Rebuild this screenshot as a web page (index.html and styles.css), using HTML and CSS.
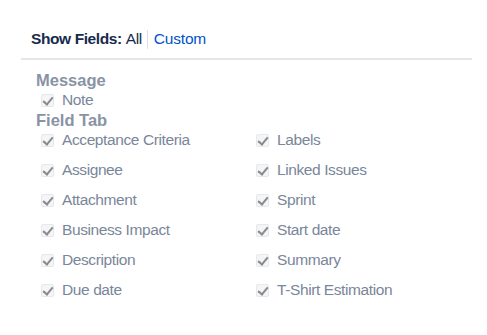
FILE: index.html
```html
<!DOCTYPE html>
<html lang="en">
<head>
    <meta charset="UTF-8">
    <title>Show Fields</title>
    <link rel="stylesheet" href="styles.css">
</head>
<body>
    <div class="toolbar">
        <span class="toolbar-label">Show Fields:</span>
        <span class="toolbar-option">All</span>
        <span class="toolbar-sep"></span>
        <a class="toolbar-option active" href="#">Custom</a>
    </div>
    <hr class="divider">

    <div class="fields">
        <div class="group-title">Message</div>
        <label class="field"><span class="check"></span>Note</label>

        <div class="group-title">Field Tab</div>
        <div class="field-grid">
            <label class="field"><span class="check"></span>Acceptance Criteria</label>
            <label class="field"><span class="check"></span>Labels</label>
            <label class="field"><span class="check"></span>Assignee</label>
            <label class="field"><span class="check"></span>Linked Issues</label>
            <label class="field"><span class="check"></span>Attachment</label>
            <label class="field"><span class="check"></span>Sprint</label>
            <label class="field"><span class="check"></span>Business Impact</label>
            <label class="field"><span class="check"></span>Start date</label>
            <label class="field"><span class="check"></span>Description</label>
            <label class="field"><span class="check"></span>Summary</label>
            <label class="field"><span class="check"></span>Due date</label>
            <label class="field"><span class="check"></span>T-Shirt Estimation</label>
        </div>
    </div>
</body>
</html>
```

FILE: styles.css
```css
body {
    font-family: 'Liberation Sans', Arial, sans-serif;
    margin: 0;
    padding: 29px 0 0 0;
    background-color: #fff;
    color: #7a869a;
}
.toolbar {
    display: flex;
    align-items: center;
    height: 20px;
    padding-left: 31px;
    font-size: 15.5px;
    letter-spacing: -0.4px;
}
.toolbar-label {
    font-weight: bold;
    color: #172b4d;
    margin-right: 4px;
}
.toolbar-option {
    color: #172b4d;
    text-decoration: none;
}
.toolbar-option.active {
    color: #0052cc;
    letter-spacing: -0.2px;
}
.toolbar-sep {
    width: 1px;
    height: 19px;
    background-color: #dfe1e6;
    margin: 0 6px 0 5px;
}
.divider {
    border: none;
    border-top: 2px solid #e4e6ea;
    margin: 9px 15px 0 21px;
}
.fields {
    padding: 10px 0 0 36px;
}
.group-title {
    font-size: 16.5px;
    font-weight: bold;
    color: #8993a4;
    height: 20px;
    line-height: 20px;
}
.field {
    display: flex;
    align-items: center;
    height: 20px;
    font-size: 15.5px;
    letter-spacing: -0.4px;
    color: #7a869a;
}
.field-grid {
    display: grid;
    grid-template-columns: 215px 215px;
    row-gap: 10px;
}
.check {
    position: relative;
    width: 11px;
    height: 11px;
    margin: 0 8px 0 5px;
    background-color: #f4f5f7;
    border: 1px solid #e6e8eb;
    border-radius: 2px;
}
.check::after {
    content: "";
    position: absolute;
    left: 3px;
    top: 0px;
    width: 4px;
    height: 8px;
    border: solid #8a8a8a;
    border-width: 0 2px 2px 0;
    transform: rotate(40deg);
}
```
